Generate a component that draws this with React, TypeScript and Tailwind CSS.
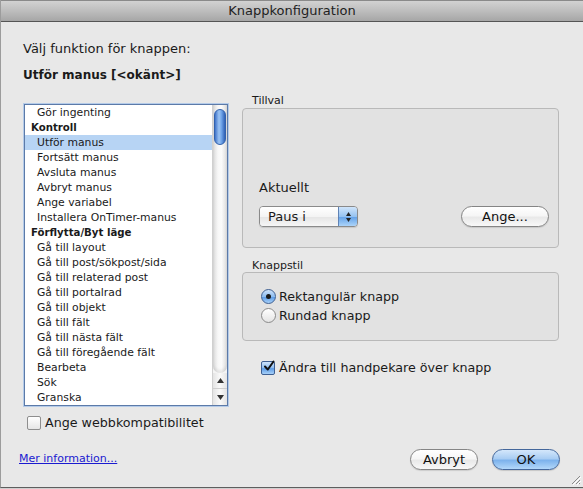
import React from "react";

type Item = { label: string; header?: boolean; selected?: boolean };

const items: Item[] = [
  { label: "Gör ingenting" },
  { label: "Kontroll", header: true },
  { label: "Utför manus", selected: true },
  { label: "Fortsätt manus" },
  { label: "Avsluta manus" },
  { label: "Avbryt manus" },
  { label: "Ange variabel" },
  { label: "Installera OnTimer-manus" },
  { label: "Förflytta/Byt läge", header: true },
  { label: "Gå till layout" },
  { label: "Gå till post/sökpost/sida" },
  { label: "Gå till relaterad post" },
  { label: "Gå till portalrad" },
  { label: "Gå till objekt" },
  { label: "Gå till fält" },
  { label: "Gå till nästa fält" },
  { label: "Gå till föregående fält" },
  { label: "Bearbeta" },
  { label: "Sök" },
  { label: "Granska" },
];

const AquaButton: React.FC<{ label: string; primary?: boolean; width: string }> = ({ label, primary, width }) => (
  <button
    className={
      primary
        ? `${width} h-[21px] rounded-full border border-[#44679b] bg-[linear-gradient(to_bottom,#d4e7fb_0%,#a9cdf3_45%,#7db2ec_55%,#b3d8fa_100%)] text-[13px] leading-none text-[#111] shadow-[0_1px_1px_rgba(0,0,0,0.15)]`
        : `${width} h-[21px] rounded-full border border-[#858585] bg-[linear-gradient(to_bottom,#ffffff_0%,#f6f6f6_45%,#e9e9e9_55%,#f8f8f8_100%)] text-[13px] leading-none text-[#111] shadow-[0_1px_1px_rgba(0,0,0,0.12)]`
    }
  >
    {label}
  </button>
);

const Checkbox: React.FC<{ checked?: boolean }> = ({ checked }) =>
  checked ? (
    <span className="relative flex h-[14px] w-[14px] shrink-0 items-center justify-center rounded-[2px] border border-[#3e5f92] bg-[linear-gradient(to_bottom,#cfe3fa_0%,#8ebdf0_50%,#5e9ce6_55%,#a7d0f8_100%)]">
      <svg width="12" height="12" viewBox="0 0 12 12" className="absolute -top-[2px] left-[1px]">
        <path d="M2 6.5 L4.8 9.5 L10.5 1.5" fill="none" stroke="#111" strokeWidth="2" strokeLinecap="round" strokeLinejoin="round" />
      </svg>
    </span>
  ) : (
    <span className="block h-[14px] w-[14px] shrink-0 rounded-[2px] border border-[#8e8e8e] bg-[linear-gradient(to_bottom,#ffffff,#e6e6e6)]" />
  );

const Radio: React.FC<{ checked?: boolean }> = ({ checked }) =>
  checked ? (
    <span className="flex h-[15px] w-[15px] shrink-0 items-center justify-center rounded-full border border-[#3e5f92] bg-[linear-gradient(to_bottom,#cfe3fa_0%,#8ebdf0_50%,#5e9ce6_55%,#a7d0f8_100%)]">
      <span className="h-[5px] w-[5px] rounded-full bg-[#1a1a1a]" />
    </span>
  ) : (
    <span className="block h-[15px] w-[15px] shrink-0 rounded-full border border-[#8a8a8a] bg-[linear-gradient(to_bottom,#ffffff,#e4e4e4)]" />
  );

const Scrollbar: React.FC = () => (
  <div className="flex w-[15px] flex-col border-l border-[#d0d0d0] bg-[#f4f4f4]">
    <div className="flex-1 rounded-b-[7px] bg-[linear-gradient(to_right,#d9d9d9,#f7f7f7_35%,#fbfbfb_60%,#dcdcdc)] pt-[4px] shadow-[inset_0_-3px_3px_rgba(0,0,0,0.08)]">
      <div className="mx-auto h-[36px] w-[12px] rounded-full border border-[#3262ad] bg-[linear-gradient(to_right,#3f73c9,#9cc4f3_40%,#6ea3e8_65%,#2f60b5)]" />
    </div>
    <div className="flex h-[16px] items-center justify-center border-b border-[#cfcfcf] bg-[linear-gradient(to_right,#e4e4e4,#fafafa,#e4e4e4)]">
      <svg width="7" height="5" viewBox="0 0 7 5"><path d="M3.5 0 L7 5 L0 5 Z" fill="#333" /></svg>
    </div>
    <div className="flex h-[16px] items-center justify-center bg-[linear-gradient(to_right,#e4e4e4,#fafafa,#e4e4e4)]">
      <svg width="7" height="5" viewBox="0 0 7 5"><path d="M0 0 L7 0 L3.5 5 Z" fill="#333" /></svg>
    </div>
  </div>
);

const App: React.FC = () => {
  return (
    <div className="h-[489px] w-[583px] bg-[#cfcfcf] font-['DejaVu_Sans',Verdana,sans-serif] text-[#1a1a1a]">
      <div className="relative flex h-[488px] w-[583px] flex-col border-b border-l border-[#5e5e5e] border-l-[#9c9c9c] bg-[#e8e8e8]">
        {/* title bar */}
        <div className="flex h-[22px] shrink-0 items-center justify-center border-b border-[#555] border-t border-t-[#8a8a8a] bg-[linear-gradient(to_bottom,#d2d2d2,#bdbdbd_50%,#a6a6a6)] text-[13px] text-[#222]">
          Knappkonfiguration
        </div>

        <div className="pl-[22px]">
          <div className="mt-[19px] text-[13px] leading-[16px]">Välj funktion för knappen:</div>
          <div className="mt-[10px] text-[12px] font-bold leading-[16px]">Utför manus [&lt;okänt&gt;]</div>

          <div className="mt-[11px] flex gap-[14px]">
            {/* left column */}
            <div className="ml-[1px] w-[204px]">
              <div className="mt-[10px] flex h-[302px] border border-[#5c7aa8] bg-white shadow-[0_0_0_1px_#b4cbe9]">
                <div className="flex-1 overflow-hidden">
                  {items.map((it) => (
                    <div
                      key={it.label}
                      className={`h-[15px] whitespace-nowrap leading-[15px] ${
                        it.header ? "pl-[6px] text-[10.2px] font-bold" : "pl-[12px] text-[10.8px]"
                      } ${it.selected ? "bg-[#b7d4f4]" : ""}`}
                    >
                      {it.label}
                    </div>
                  ))}
                </div>
                <Scrollbar />
              </div>
              <div className="mt-[9px] flex h-[16px] items-center gap-[4px] pl-[3px]">
                <Checkbox />
                <span className="whitespace-nowrap text-[12.7px]">Ange webbkompatibilitet</span>
              </div>
            </div>

            {/* right column */}
            <div className="w-[317px]">
              <div className="pl-[10px] text-[11px] leading-[14px]">Tillval</div>
              <div className="flex h-[140px] flex-col justify-end rounded-[4px] border border-[#b9b9b9] bg-[#e2e2e2] pb-[20px] pl-[16px] pr-[9px]">
                <div className="text-[13px] leading-[16px]">Aktuellt</div>
                <div className="mt-[10px] flex items-center justify-between">
                  <div className="flex h-[21px] w-[99px] overflow-hidden rounded-[4px] border border-[#8a8a8a] shadow-[0_1px_1px_rgba(0,0,0,0.12)]">
                    <div className="flex flex-1 items-center bg-[linear-gradient(to_bottom,#ffffff_0%,#f4f4f4_50%,#e6e6e6_55%,#f6f6f6_100%)] pl-[8px] text-[13px]">
                      Paus i
                    </div>
                    <div className="flex w-[19px] flex-col items-center justify-center gap-[2px] border-l border-[#5f82b5] bg-[linear-gradient(to_bottom,#d0e5fb_0%,#95c2f1_50%,#67a4e9_55%,#acd4f9_100%)]">
                      <svg width="5" height="4" viewBox="0 0 5 4"><path d="M2.5 0 L5 4 L0 4 Z" fill="#222" /></svg>
                      <svg width="5" height="4" viewBox="0 0 5 4"><path d="M0 0 L5 0 L2.5 4 Z" fill="#222" /></svg>
                    </div>
                  </div>
                  <AquaButton label="Ange..." width="w-[88px]" />
                </div>
              </div>

              <div className="mt-[11px] pl-[10px] text-[11px] leading-[13px]">Knappstil</div>
              <div className="h-[69px] rounded-[4px] border border-[#b9b9b9] bg-[#e2e2e2] pl-[18px] pt-[14px]">
                <div className="flex h-[19px] items-center gap-[3px]">
                  <Radio checked />
                  <span className="text-[12.7px]">Rektangulär knapp</span>
                </div>
                <div className="flex h-[19px] items-center gap-[3px]">
                  <Radio />
                  <span className="text-[12.7px]">Rundad knapp</span>
                </div>
              </div>

              <div className="mt-[18px] flex h-[18px] items-center gap-[4px] pl-[19px]">
                <Checkbox checked />
                <span className="whitespace-nowrap text-[12.7px]">Ändra till handpekare över knapp</span>
              </div>
            </div>
          </div>
        </div>

        {/* bottom row */}
        <div className="mt-[18px] flex h-[21px] items-center justify-between pl-[18px] pr-[23px]">
          <span className="text-[11px] text-[#1a1ad0] underline">Mer information...</span>
          <div className="flex gap-[14px]">
            <AquaButton label="Avbryt" width="w-[68px]" />
            <AquaButton label="OK" primary width="w-[68px]" />
          </div>
        </div>

        {/* resize grip */}
        <svg className="absolute bottom-[2px] right-[2px]" width="12" height="12" viewBox="0 0 12 12">
          <path d="M11 3 L3 11 M11 7 L7 11 M11 10 L10 11" stroke="#8a8a8a" strokeWidth="1" />
          <path d="M12 4 L4 12 M12 8 L8 12" stroke="#ffffff" strokeWidth="1" />
        </svg>
      </div>
    </div>
  );
};

export default App;
